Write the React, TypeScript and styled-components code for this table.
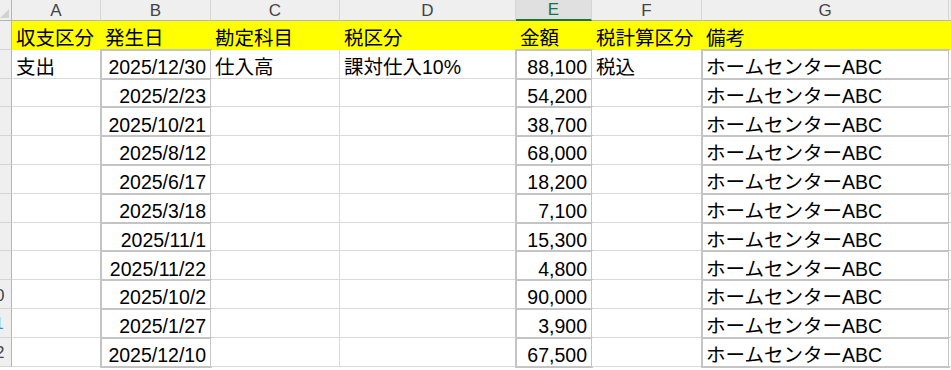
import React from "react"
import styled, { createGlobalStyle, css } from "styled-components"

const GlobalStyle = createGlobalStyle`
  html, body {
    margin: 0;
    padding: 0;
    background: #ffffff;
    overflow: hidden;
  }
  body {
    font-family: "Liberation Sans", "Noto Sans CJK JP", sans-serif;
  }
`

const GRID = "#dadada"
const BOX = "#c4c4c4"
const YELLOW = "#ffff00"
const GREEN = "#1e7145"

const Sheet = styled.div`
  display: grid;
  grid-template-columns: 12px 89px 110px 129px 176px 76px 110px 247px 1fr;
  grid-template-rows: 21px repeat(12, 28.8px);
  width: 951px;
  height: 370px;
  overflow: hidden;
`

const Corner = styled.div`
  box-sizing: border-box;
  background: #efefef;
  border-right: 1px solid #b4b4b4;
  border-bottom: 1px solid #b4b4b4;
  display: flex;
  align-items: flex-end;
  justify-content: flex-end;
  padding: 0 2px 2px 0;
`

const ColHead = styled.div<{ $active?: boolean }>`
  box-sizing: border-box;
  display: flex;
  align-items: center;
  justify-content: center;
  padding-top: 1px;
  font-size: 17px;
  color: #444444;
  background: #efefef;
  border-right: 1px solid #d5d5d5;
  border-bottom: 1px solid #b4b4b4;
  ${p =>
    p.$active &&
    css`
      background: #e0e0e0;
      color: ${GREEN};
      border-bottom: 2px solid ${GREEN};
    `}
`

const RowHead = styled.div<{ $tint?: string }>`
  box-sizing: border-box;
  background: #efefef;
  border-right: 1px solid #b4b4b4;
  border-bottom: 1px solid #d5d5d5;
  overflow: hidden;
  display: flex;
  align-items: center;
  padding-top: 3px;
  font-size: 17px;
  color: ${p => p.$tint || "#444444"};
`

// the row-number column is scrolled mostly out of view: only the last
// digit of two-digit numbers peeks in at the left edge
const RowLabel = styled.span`
  flex: none;
  width: 34px;
  margin-left: -22px;
  text-align: center;
`

const Cell = styled.div<{ $fill?: boolean; $right?: boolean; $boxed?: boolean }>`
  box-sizing: border-box;
  display: flex;
  align-items: flex-end;
  justify-content: ${p => (p.$right ? "flex-end" : "flex-start")};
  padding: 0 4px;
  font-size: 19.5px;
  line-height: 19.5px;
  color: #000000;
  white-space: nowrap;
  background: ${p => (p.$fill ? YELLOW : "#ffffff")};
  border-right: 1px solid ${p => (p.$fill ? YELLOW : GRID)};
  border-bottom: 1px solid ${p => (p.$fill ? YELLOW : GRID)};
  ${p =>
    p.$boxed &&
    css`
      outline: 2px solid ${BOX};
      outline-offset: -1px;
    `}
`

const columns = ["A", "B", "C", "D", "E", "F", "G", ""]
const headers = ["収支区分", "発生日", "勘定科目", "税区分", "金額", "税計算区分", "備考", ""]

type Row = { kind?: string; date: string; account?: string; tax?: string; amount: string; calc?: string; memo: string }

const rows: Row[] = [
  { kind: "支出", date: "2025/12/30", account: "仕入高", tax: "課対仕入10%", amount: "88,100", calc: "税込", memo: "ホームセンターABC" },
  { date: "2025/2/23", amount: "54,200", memo: "ホームセンターABC" },
  { date: "2025/10/21", amount: "38,700", memo: "ホームセンターABC" },
  { date: "2025/8/12", amount: "68,000", memo: "ホームセンターABC" },
  { date: "2025/6/17", amount: "18,200", memo: "ホームセンターABC" },
  { date: "2025/3/18", amount: "7,100", memo: "ホームセンターABC" },
  { date: "2025/11/1", amount: "15,300", memo: "ホームセンターABC" },
  { date: "2025/11/22", amount: "4,800", memo: "ホームセンターABC" },
  { date: "2025/10/2", amount: "90,000", memo: "ホームセンターABC" },
  { date: "2025/1/27", amount: "3,900", memo: "ホームセンターABC" },
  { date: "2025/12/10", amount: "67,500", memo: "ホームセンターABC" },
]

const SelectAll = () => (
  <svg width="9" height="9" viewBox="0 0 9 9">
    <polygon points="9,0 9,9 0,9" fill="#d2d2d2" />
  </svg>
)

export default function App() {
  return (
    <>
      <GlobalStyle />
      <Sheet>
        <Corner>
          <SelectAll />
        </Corner>
        {columns.map((c, i) => (
          <ColHead key={"h" + i} $active={c === "E"}>
            {c}
          </ColHead>
        ))}

        <RowHead />
        {headers.map((h, i) => (
          <Cell key={"t" + i} $fill>
            {h}
          </Cell>
        ))}

        {rows.map((r, i) => {
          const n = i + 2
          return (
            <React.Fragment key={i}>
              <RowHead $tint={n === 11 ? "#3f7fd4" : undefined}>
                {n >= 10 && <RowLabel>{n}</RowLabel>}
              </RowHead>
              <Cell>{r.kind}</Cell>
              <Cell $right $boxed>
                {r.date}
              </Cell>
              <Cell>{r.account}</Cell>
              <Cell>{r.tax}</Cell>
              <Cell $right $boxed>
                {r.amount}
              </Cell>
              <Cell>{r.calc}</Cell>
              <Cell $boxed>{r.memo}</Cell>
              <Cell />
            </React.Fragment>
          )
        })}
      </Sheet>
    </>
  )
}
